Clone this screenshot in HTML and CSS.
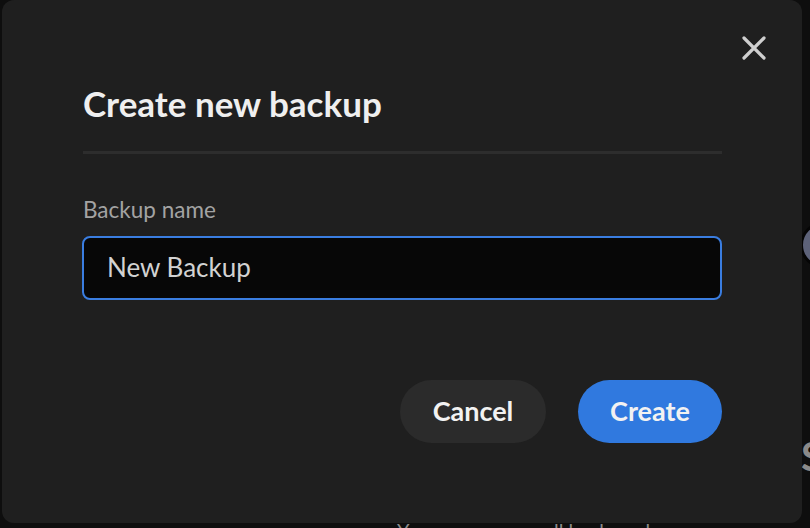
FILE: index.html
```html
<!DOCTYPE html>
<html>
<head>
<meta charset="utf-8">
<link rel="stylesheet" href="styles.css">
</head>
<body>
<div class="page">
  <div class="bg-avatar"></div>
  <div class="bg-heading">S</div>
  <div class="bg-text">You can manage all backups here</div>
</div>
<div class="modal">
  <button class="close" aria-label="Close">
    <svg width="26" height="26" viewBox="0 0 26 26"><path d="M3 3 L23 23 M23 3 L3 23" stroke="#cfcfcf" stroke-width="3.2" stroke-linecap="round"/></svg>
  </button>
  <h1 class="title">Create new backup</h1>
  <div class="divider"></div>
  <label class="label">Backup name</label>
  <div class="input">New Backup</div>
  <div class="actions">
    <button class="btn btn-cancel">Cancel</button>
    <button class="btn btn-create">Create</button>
  </div>
</div>
</body>
</html>
```
FILE: styles.css
```css
html, body {
  margin: 0;
  padding: 0;
  background: #0e0e0e;
  width: 810px;
  height: 528px;
  overflow: hidden;
  font-family: Lato, "Noto Sans", sans-serif;
}
.page {
  position: relative;
  width: 810px;
  height: 528px;
}
.bg-avatar {
  position: absolute;
  left: 800px;
  top: 222px;
  width: 46px;
  height: 46px;
  border-radius: 50%;
  background: #5d6279;
  border: 3px solid #050505;
  box-sizing: border-box;
}
.bg-heading {
  position: absolute;
  left: 801px;
  top: 432px;
  font-size: 40px;
  font-weight: 700;
  color: #8a8a8a;
}
.bg-text {
  position: absolute;
  left: 397px;
  top: 518px;
  font-size: 20px;
  color: #8a8a8a;
  white-space: nowrap;
}
.modal {
  position: absolute;
  left: 2px;
  top: 0;
  width: 800px;
  height: 523px;
  box-sizing: border-box;
  background: #1f1f1f;
  border-radius: 12px;
  padding: 81px 80px 0 81px;
  display: flex;
  flex-direction: column;
}
.close {
  position: absolute;
  right: 35px;
  top: 35px;
  width: 26px;
  height: 26px;
  padding: 0;
  border: 0;
  background: transparent;
  display: flex;
}
.title {
  margin: 0;
  font-size: 35px;
  line-height: 44px;
  font-weight: 700;
  color: #efefef;
}
.divider {
  height: 3px;
  background: #2d2d2d;
  margin-top: 26px;
}
.label {
  margin-top: 43px;
  font-size: 22.5px;
  line-height: 26px;
  color: #a3a3a3;
}
.input {
  margin-top: 13px;
  height: 64px;
  box-sizing: border-box;
  border: 2px solid #3a7de0;
  border-radius: 8px;
  background: #070707;
  padding: 0 0 2px 23px;
  display: flex;
  align-items: center;
  font-size: 26px;
  color: #d2d2d2;
  margin-left: -1px;
}
.actions {
  margin-top: 80px;
  display: flex;
  justify-content: flex-end;
  gap: 32px;
}
.btn {
  height: 63px;
  border: 0;
  border-radius: 32px;
  font-family: Lato, "Noto Sans", sans-serif;
  font-size: 27px;
  font-weight: 700;
  color: #f2f2f2;
  padding: 0 0 3px;
}
.btn-cancel {
  width: 146px;
  background: #2b2b2b;
}
.btn-create {
  width: 144px;
  background: #3079df;
}
```
